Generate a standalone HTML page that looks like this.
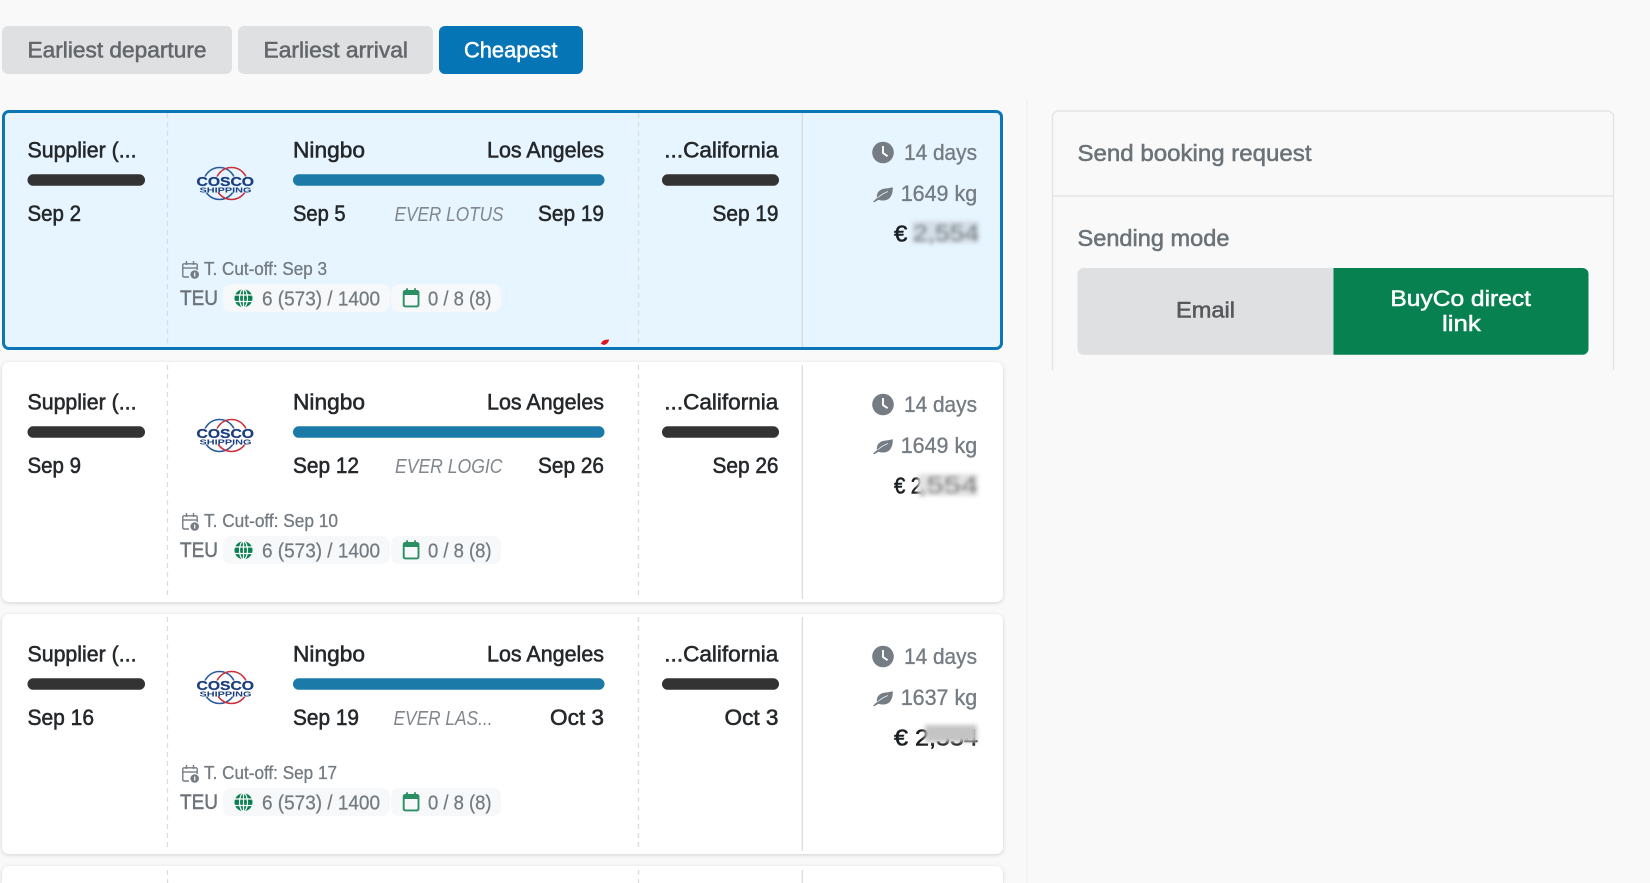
<!DOCTYPE html>
<html><head><meta charset="utf-8"><title>Booking</title>
<style>
html,body{margin:0;padding:0;width:1650px;height:883px;overflow:hidden;background:#f9f9f9}
#w{position:relative;width:1650px;height:883px;overflow:hidden;background:#f9f9f9}
svg{position:absolute;left:0;top:0}
.c{position:absolute;left:2px;width:1001px;height:240px;box-sizing:border-box;border-radius:7px;background:#fff;box-shadow:0 1px 4px rgba(0,0,0,.16)}
.s{background:#e6f5ff;border:3px solid #0b75b5;box-shadow:none}
text{font-family:"Liberation Sans",sans-serif}
.d,.g,.gs,.cut,.teu,.v,.b,.w,.p{transform:translateY(-.6px)}
.d{font-size:22px;fill:#25282b;stroke:#25282b;stroke-width:.55}
.g{font-size:22px;fill:#757c83;stroke:#757c83;stroke-width:.35}
.gs{font-size:20px;fill:#737a80;stroke:#737a80;stroke-width:.25}
.cut{font-size:18px;fill:#737a80;stroke:#737a80;stroke-width:.3}
.teu{font-size:21px;fill:#6c7379;stroke:#6c7379;stroke-width:.45}
.v{font-size:20px;font-style:italic;fill:#80868c}
.e{font-size:23px;fill:#1c1f22;stroke:#1c1f22;stroke-width:.6}
.b{font-size:22px;fill:#63676b;stroke:#63676b;stroke-width:.55}
.w{font-size:22px;fill:#fff;stroke:#fff;stroke-width:.5}
.p{font-size:23px;fill:#6b7379;stroke:#6b7379;stroke-width:.55}
.l1{font-size:12.5px;font-weight:bold;fill:#1b3e80;stroke:#1b3e80;stroke-width:.25}
.l2{font-size:7px;font-weight:bold;fill:#1b3e80}
</style></head><body><div id="w">
<div class="c s" style="top:110px"></div>
<div class="c" style="top:362px"></div>
<div class="c" style="top:614px"></div>
<div class="c" style="top:866px;height:17px;border-radius:7px 7px 0 0"></div>
<svg width="1650" height="883" viewBox="0 0 1650 883" xmlns="http://www.w3.org/2000/svg">
<defs>
<filter id="bl" x="-30%" y="-40%" width="160%" height="180%"><feGaussianBlur stdDeviation="2.1"/></filter>
<clipPath id="lc"><rect x="190" y="164" width="70" height="12.500"/><rect x="190" y="192.500" width="70" height="10"/></clipPath>
<g id="struct">
<line x1="167.5" y1="113" x2="167.5" y2="347" stroke="#dcdcdc" stroke-width="1.3" stroke-dasharray="5 4"/>
<line x1="638.5" y1="113" x2="638.5" y2="347" stroke="#dcdcdc" stroke-width="1.3" stroke-dasharray="5 4"/>
<line x1="802.3" y1="113" x2="802.3" y2="347" stroke="#d6d8da" stroke-width="1.2"/>
<rect x="27.5" y="174.3" width="117.5" height="11.5" rx="5.7" fill="#333"/>
<rect x="293" y="174.3" width="311.5" height="11.5" rx="5.7" fill="#1c7aa8"/>
<rect x="662" y="174.3" width="117" height="11.5" rx="5.7" fill="#333"/>
<g clip-path="url(#lc)" fill="none" stroke-width="1.6"><circle cx="219.5" cy="183.5" r="16" stroke="#2a5a9c"/><circle cx="231.5" cy="183.5" r="16" stroke="#c9303c"/></g>
<rect x="223" y="284" width="167" height="28" rx="8" fill="#f6f8f9"/>
<rect x="391" y="284" width="110" height="28" rx="8" fill="#f6f8f9"/>
<circle cx="243.5" cy="298.3" r="9" fill="#08814f"/>
<g fill="none" stroke="#fff" stroke-width="1.2"><ellipse cx="243.5" cy="298.3" rx="4" ry="9"/><line x1="243.5" y1="289" x2="243.5" y2="307.5"/><line x1="234.5" y1="295" x2="252.5" y2="295"/><line x1="234.5" y1="301.5" x2="252.5" y2="301.5"/></g>
<g fill="none" stroke="#2c8e63" stroke-width="1.9"><rect x="403.7" y="291" width="14.8" height="15.4" rx="1.5"/><line x1="407" y1="288.3" x2="407" y2="292"/><line x1="415" y1="288.3" x2="415" y2="292"/><line x1="403.7" y1="293.5" x2="418.5" y2="293.5" stroke-width="3"/></g>
<g fill="none" stroke="#757c83" stroke-width="1.4"><path d="M189 277H184a1.2 1.2 0 0 1-1.2-1.2V265a1.2 1.2 0 0 1 1.2-1.2H196a1.2 1.2 0 0 1 1.2 1.2V270"/><line x1="186.5" y1="261" x2="186.5" y2="265"/><line x1="193.5" y1="261" x2="193.5" y2="265"/><line x1="183" y1="268" x2="197" y2="268"/></g>
<circle cx="194.7" cy="274.5" r="4.3" fill="#757c83"/><line x1="194.7" y1="272.5" x2="194.7" y2="276.5" stroke="#fff" stroke-width="1.2"/>
<circle cx="883" cy="152.5" r="10.8" fill="#757c83"/><path d="M883 146v7l4.6 3.2" fill="none" stroke="#fff" stroke-width="1.9"/>
<path d="M873 201.7c2-1.8 3-3 4-3.6c-1-5 2.5-8.5 7-9.3c3-.5 6-.8 8.7-1.5c.3 4-.6 8-3 10.7c-2.6 2.6-7 3.3-11 1.7c-1.3.5-3 1.5-4.2 2.6z" fill="#757c83"/><path d="M877.5 198c3-3 6.500-5 10.500-6.500" fill="none" stroke="#e6f5ff" stroke-width=".8"/>
</g>
</defs>

<rect x="2" y="26" width="230" height="48" rx="6" fill="#dfe0e1"/>
<rect x="238" y="26" width="195" height="48" rx="6" fill="#dfe0e1"/>
<rect x="439" y="26" width="144" height="48" rx="6" fill="#0575b5"/>
<text class="b" x="27.5" y="58.300" textLength="179" lengthAdjust="spacingAndGlyphs">Earliest departure</text>
<text class="b" x="263.500" y="58.300" textLength="144.500" lengthAdjust="spacingAndGlyphs">Earliest arrival</text>
<text class="w" x="464" y="58.300" textLength="93.500" lengthAdjust="spacingAndGlyphs">Cheapest</text>

<line x1="1027" y1="100" x2="1027" y2="883" stroke="#f1f1f1" stroke-width="1.5"/>
<path d="M1052.500 370V117a6 6 0 0 1 6-6H1607.500a6 6 0 0 1 6 6V370" fill="none" stroke="#e0e2e4" stroke-width="1.300"/>
<line x1="1052.500" y1="196" x2="1613.500" y2="196" stroke="#e0e2e4" stroke-width="1.300"/>
<text class="p" x="1077.500" y="161.700" textLength="234" lengthAdjust="spacingAndGlyphs">Send booking request</text>
<text class="p" x="1077.500" y="246.700" textLength="152" lengthAdjust="spacingAndGlyphs">Sending mode</text>
<path d="M1333.500 268H1083.500a6 6 0 0 0-6 6V348.700a6 6 0 0 0 6 6H1333.500z" fill="#dfe0e1"/>
<path d="M1333.500 268H1582.500a6 6 0 0 1 6 6V348.700a6 6 0 0 1-6 6H1333.500z" fill="#07814f"/>
<text class="b" x="1176" y="318.300" textLength="59" lengthAdjust="spacingAndGlyphs" style="fill:#55585b;stroke:#55585b">Email</text>
<text class="w" x="1390.400" y="306.700" textLength="140.600" lengthAdjust="spacingAndGlyphs">BuyCo direct</text>
<text class="w" x="1442" y="331.700" textLength="38.800" lengthAdjust="spacingAndGlyphs">link</text>

<!-- card 1 -->
<g>
<use href="#struct"/>
<text class="d" x="27.500" y="158.300" textLength="109" lengthAdjust="spacingAndGlyphs">Supplier (...</text>
<text class="d" x="27.500" y="221.700" textLength="53.500" lengthAdjust="spacingAndGlyphs">Sep 2</text>
<text class="l1" x="196.500" y="186" textLength="57.500" lengthAdjust="spacingAndGlyphs">COSCO</text>
<text class="l2" x="199.500" y="192.500" textLength="52" lengthAdjust="spacingAndGlyphs">SHIPPING</text>
<text class="d" x="293" y="158.300" textLength="72" lengthAdjust="spacingAndGlyphs">Ningbo</text>
<text class="d" x="487" y="158.300" textLength="117" lengthAdjust="spacingAndGlyphs">Los Angeles</text>
<text class="d" x="293" y="221.700" textLength="52.500" lengthAdjust="spacingAndGlyphs">Sep 5</text>
<text class="v" x="394.500" y="221.700" textLength="109" lengthAdjust="spacingAndGlyphs">EVER LOTUS</text>
<text class="d" x="538" y="221.700" textLength="66" lengthAdjust="spacingAndGlyphs">Sep 19</text>
<text class="cut" x="204" y="275.700" textLength="123" lengthAdjust="spacingAndGlyphs">T. Cut-off: Sep 3</text>
<text class="teu" x="180" y="305.700" textLength="38" lengthAdjust="spacingAndGlyphs">TEU</text>
<text class="gs" x="262" y="306" textLength="118" lengthAdjust="spacingAndGlyphs">6 (573) / 1400</text>
<text class="gs" x="428" y="306" textLength="63.500" lengthAdjust="spacingAndGlyphs">0 / 8 (8)</text>
<text class="d" x="664.300" y="158.300" textLength="114" lengthAdjust="spacingAndGlyphs">...California</text>
<text class="d" x="712.500" y="221.700" textLength="66" lengthAdjust="spacingAndGlyphs">Sep 19</text>
<text class="g" x="904" y="160.700" textLength="73" lengthAdjust="spacingAndGlyphs">14 days</text>
<text class="g" x="900.700" y="201.700" textLength="76.500" lengthAdjust="spacingAndGlyphs">1649 kg</text>
<text class="e" x="894" y="241.700" textLength="13.300" lengthAdjust="spacingAndGlyphs">€</text>
<rect x="912" y="221" width="67" height="22" fill="#d4dfe7" filter="url(#bl)"/>
<text class="e" x="913" y="241" textLength="66" lengthAdjust="spacingAndGlyphs" filter="url(#bl)" style="fill:#70767c;stroke:none">2,554</text>
</g>
<path d="M601 344c.5-3 3-4.500 8-4.500c0 3-3 5-5 5.500z" fill="#e3131b"/>

<!-- card 2 -->
<g transform="translate(0,252)">
<use href="#struct"/>
<text class="d" x="27.500" y="158.300" textLength="109" lengthAdjust="spacingAndGlyphs">Supplier (...</text>
<text class="d" x="27.500" y="221.700" textLength="53.500" lengthAdjust="spacingAndGlyphs">Sep 9</text>
<text class="l1" x="196.500" y="186" textLength="57.500" lengthAdjust="spacingAndGlyphs">COSCO</text>
<text class="l2" x="199.500" y="192.500" textLength="52" lengthAdjust="spacingAndGlyphs">SHIPPING</text>
<text class="d" x="293" y="158.300" textLength="72" lengthAdjust="spacingAndGlyphs">Ningbo</text>
<text class="d" x="487" y="158.300" textLength="117" lengthAdjust="spacingAndGlyphs">Los Angeles</text>
<text class="d" x="293" y="221.700" textLength="66" lengthAdjust="spacingAndGlyphs">Sep 12</text>
<text class="v" x="395" y="221.700" textLength="107.500" lengthAdjust="spacingAndGlyphs">EVER LOGIC</text>
<text class="d" x="538" y="221.700" textLength="66" lengthAdjust="spacingAndGlyphs">Sep 26</text>
<text class="cut" x="204" y="275.700" textLength="134" lengthAdjust="spacingAndGlyphs">T. Cut-off: Sep 10</text>
<text class="teu" x="180" y="305.700" textLength="38" lengthAdjust="spacingAndGlyphs">TEU</text>
<text class="gs" x="262" y="306" textLength="118" lengthAdjust="spacingAndGlyphs">6 (573) / 1400</text>
<text class="gs" x="428" y="306" textLength="63.500" lengthAdjust="spacingAndGlyphs">0 / 8 (8)</text>
<text class="d" x="664.300" y="158.300" textLength="114" lengthAdjust="spacingAndGlyphs">...California</text>
<text class="d" x="712.500" y="221.700" textLength="66" lengthAdjust="spacingAndGlyphs">Sep 26</text>
<text class="g" x="904" y="160.700" textLength="73" lengthAdjust="spacingAndGlyphs">14 days</text>
<text class="g" x="900.700" y="201.700" textLength="76.500" lengthAdjust="spacingAndGlyphs">1649 kg</text>
<text class="e" x="894" y="241.700" textLength="28" lengthAdjust="spacingAndGlyphs">€ 2</text>
<rect x="918" y="222" width="60" height="22" fill="#e2e2e2" filter="url(#bl)"/>
<text class="e" x="918" y="241" textLength="60" lengthAdjust="spacingAndGlyphs" filter="url(#bl)" style="fill:#7c7c7c;stroke:none">,554</text>
</g>

<!-- card 3 -->
<g transform="translate(0,504)">
<use href="#struct"/>
<text class="d" x="27.500" y="158.300" textLength="109" lengthAdjust="spacingAndGlyphs">Supplier (...</text>
<text class="d" x="27.500" y="221.700" textLength="66.500" lengthAdjust="spacingAndGlyphs">Sep 16</text>
<text class="l1" x="196.500" y="186" textLength="57.500" lengthAdjust="spacingAndGlyphs">COSCO</text>
<text class="l2" x="199.500" y="192.500" textLength="52" lengthAdjust="spacingAndGlyphs">SHIPPING</text>
<text class="d" x="293" y="158.300" textLength="72" lengthAdjust="spacingAndGlyphs">Ningbo</text>
<text class="d" x="487" y="158.300" textLength="117" lengthAdjust="spacingAndGlyphs">Los Angeles</text>
<text class="d" x="293" y="221.700" textLength="66" lengthAdjust="spacingAndGlyphs">Sep 19</text>
<text class="v" x="393.500" y="221.700" textLength="99" lengthAdjust="spacingAndGlyphs">EVER LAS...</text>
<text class="d" x="550" y="221.700" textLength="54" lengthAdjust="spacingAndGlyphs">Oct 3</text>
<text class="cut" x="204" y="275.700" textLength="133" lengthAdjust="spacingAndGlyphs">T. Cut-off: Sep 17</text>
<text class="teu" x="180" y="305.700" textLength="38" lengthAdjust="spacingAndGlyphs">TEU</text>
<text class="gs" x="262" y="306" textLength="118" lengthAdjust="spacingAndGlyphs">6 (573) / 1400</text>
<text class="gs" x="428" y="306" textLength="63.500" lengthAdjust="spacingAndGlyphs">0 / 8 (8)</text>
<text class="d" x="664.300" y="158.300" textLength="114" lengthAdjust="spacingAndGlyphs">...California</text>
<text class="d" x="724.500" y="221.700" textLength="54" lengthAdjust="spacingAndGlyphs">Oct 3</text>
<text class="g" x="904" y="160.700" textLength="73" lengthAdjust="spacingAndGlyphs">14 days</text>
<text class="g" x="900.700" y="201.700" textLength="76.500" lengthAdjust="spacingAndGlyphs">1637 kg</text>
<text class="e" x="894" y="241.700" textLength="84" lengthAdjust="spacingAndGlyphs">€ 2,554</text>
<rect x="925" y="221" width="52" height="17" fill="#c4c4c4" filter="url(#bl)"/>
</g>

<!-- card 4 top -->
<line x1="167.500" y1="870" x2="167.500" y2="883" stroke="#dcdcdc" stroke-width="1.300" stroke-dasharray="5 4"/>
<line x1="638.500" y1="870" x2="638.500" y2="883" stroke="#dcdcdc" stroke-width="1.300" stroke-dasharray="5 4"/>
<line x1="802.300" y1="870" x2="802.300" y2="883" stroke="#d6d8da" stroke-width="1.200"/>
</svg>
</div></body></html>
